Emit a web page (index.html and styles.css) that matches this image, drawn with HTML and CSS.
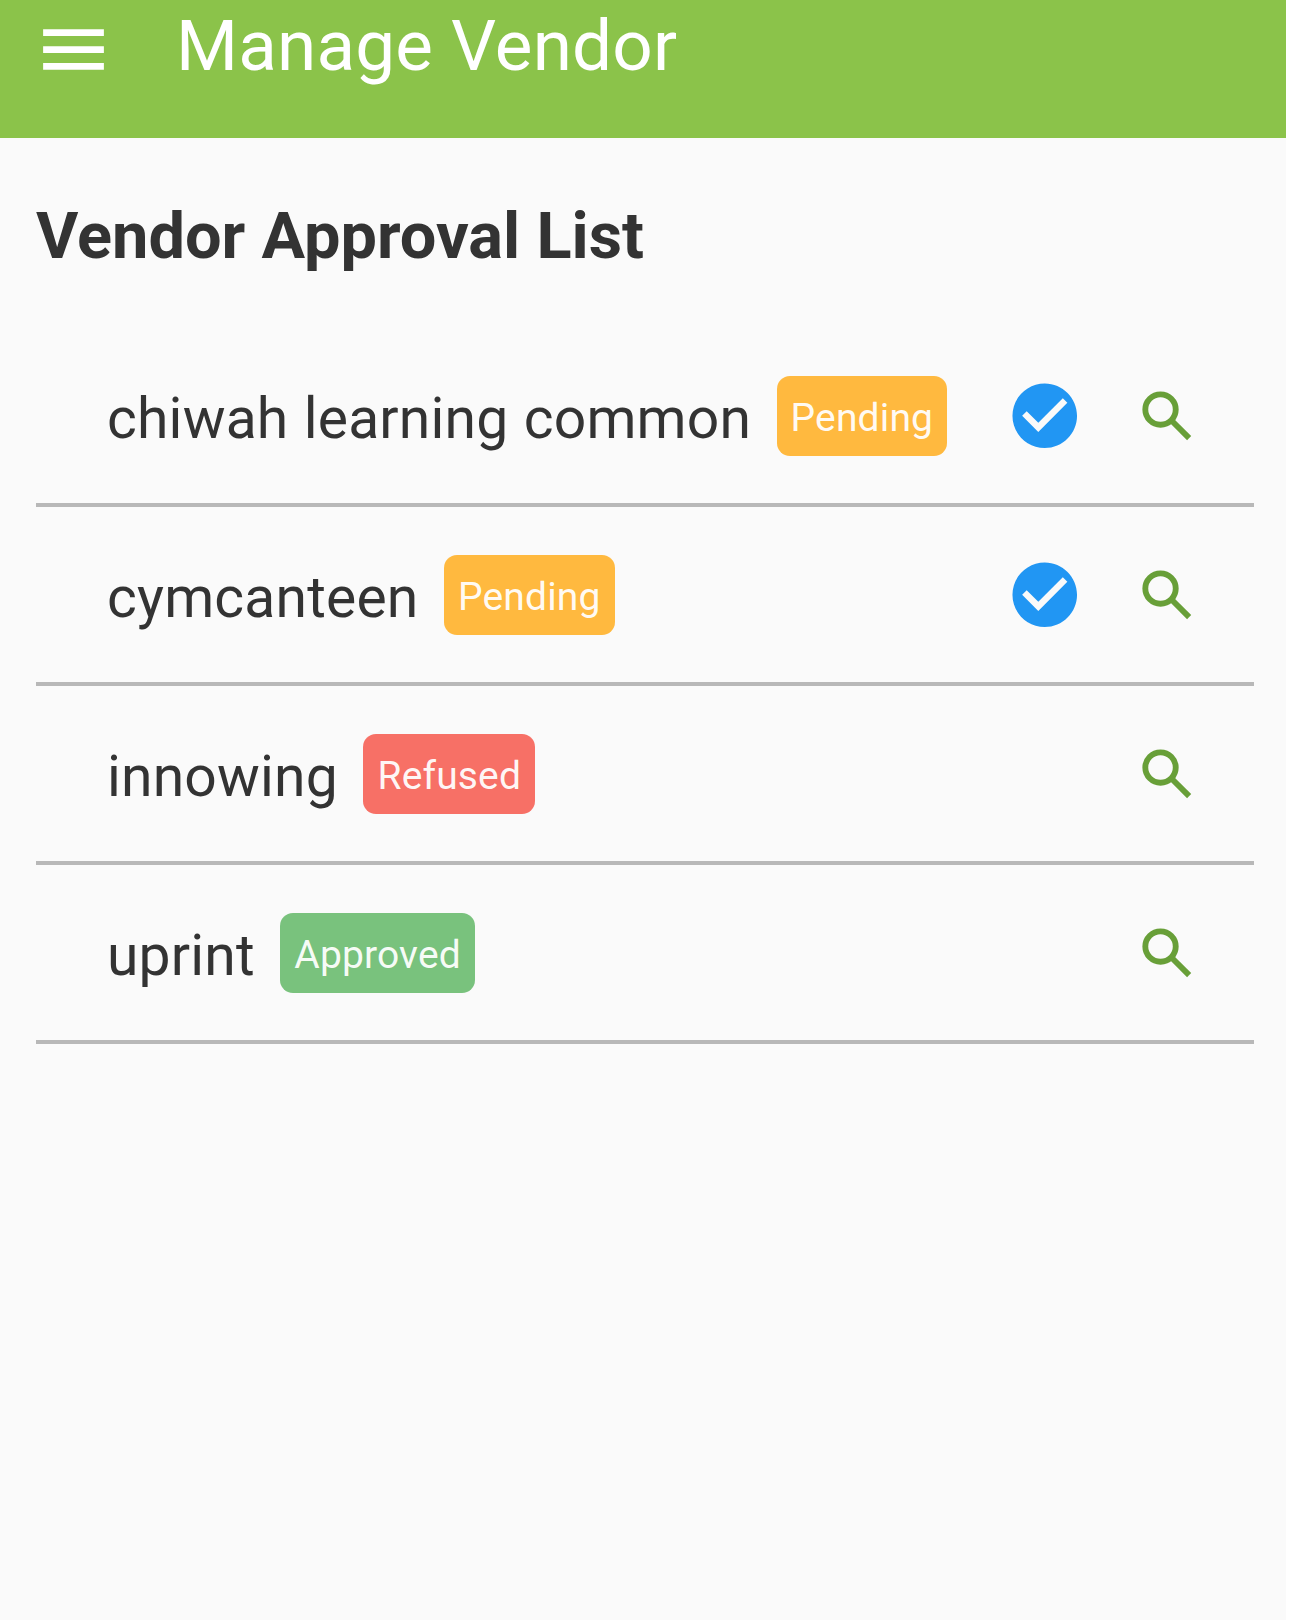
FILE: index.html
```html
<!DOCTYPE html>
<html lang="en">
<head>
<meta charset="utf-8">
<title>Manage Vendor</title>
<link rel="stylesheet" href="styles.css">
</head>
<body>
<svg class="sprite" aria-hidden="true">
  <symbol id="menu" viewBox="0 0 24 24"><path d="M3 18h18v-2H3v2zm0-5h18v-2H3v2zm0-7v2h18V6H3z"/></symbol>
  <symbol id="check" viewBox="0 0 24 24"><path d="M12 2C6.48 2 2 6.48 2 12s4.48 10 10 10 10-4.48 10-10S17.52 2 12 2zm-2 15l-5-5 1.41-1.41L10 14.17l7.59-7.59L19 8l-9 9z"/></symbol>
  <symbol id="search" viewBox="0 0 24 24"><circle cx="9.5" cy="9.5" r="5.45"/><path d="M13.6 13.6l6.15 6.15"/></symbol>
</svg>
<div class="app">
  <header class="app-bar">
    <svg class="menu-icon"><use href="#menu"/></svg>
    <h1 class="app-title">Manage Vendor</h1>
  </header>
  <main class="content">
    <h2 class="list-title">Vendor Approval List</h2>
    <ul class="vendors">
      <li class="vendor">
        <span class="name">chiwah learning common</span>
        <span class="badge pending">Pending</span>
        <span class="actions"><svg class="check-icon"><use href="#check"/></svg><svg class="search-icon"><use href="#search"/></svg></span>
      </li>
      <li class="vendor">
        <span class="name">cymcanteen</span>
        <span class="badge pending">Pending</span>
        <span class="actions"><svg class="check-icon"><use href="#check"/></svg><svg class="search-icon"><use href="#search"/></svg></span>
      </li>
      <li class="vendor">
        <span class="name">innowing</span>
        <span class="badge refused">Refused</span>
        <span class="actions"><svg class="search-icon"><use href="#search"/></svg></span>
      </li>
      <li class="vendor">
        <span class="name">uprint</span>
        <span class="badge approved">Approved</span>
        <span class="actions"><svg class="search-icon"><use href="#search"/></svg></span>
      </li>
    </ul>
  </main>
</div>
</body>
</html>
```
FILE: styles.css
```css
* { box-sizing: border-box; }
body {
  margin: 0;
  background: #fff;
  color: #333;
  font-family: Roboto, "Liberation Sans", sans-serif;
}
.sprite { display: none; }
.app {
  width: 1286px;
  min-height: 1620px;
  background: #fafafa;
}
.app-bar {
  display: flex;
  align-items: flex-start;
  height: 138px;
  padding: 9px 33px 0;
  background: #8bc34a;
  color: #fff;
}
.menu-icon {
  width: 81px;
  height: 81px;
  fill: currentColor;
}
.app-title {
  margin: 0 0 0 62px;
  font-size: 71px;
  font-weight: 400;
  line-height: 74px;
  letter-spacing: 0.2px;
  white-space: nowrap;
}
.content { padding: 58px 32px 0 36px; }
.list-title {
  margin: 0;
  height: 132px;
  font-size: 64.9px;
  font-weight: 700;
  line-height: 80px;
  white-space: nowrap;
}
.vendors {
  margin: 0;
  padding: 0;
  list-style: none;
}
.vendor {
  display: flex;
  align-items: center;
  height: 179px;
  padding: 0 53px 0 71px;
  border-bottom: 4px solid #b8b8b8;
}
.name {
  margin-top: 7px;
  font-size: 57px;
  line-height: 70px;
  letter-spacing: 0.18px;
  word-spacing: 1px;
  white-space: nowrap;
}
.badge {
  height: 80px;
  margin-left: 25.5px;
  padding: 0 14px;
  border-radius: 13px;
  color: rgba(255, 255, 255, 0.95);
  font-size: 39px;
  line-height: 85px;
  letter-spacing: 0.15px;
}
.pending { background: #ffb93f; }
.refused { background: #f77066; }
.approved { background: #79c27d; }
.actions {
  display: flex;
  align-items: center;
  gap: 51px;
  margin: 1px 0 0 auto;
}
.check-icon {
  width: 77.5px;
  height: 77.5px;
  fill: #2196f3;
}
.search-icon {
  width: 67px;
  height: 67px;
  fill: none;
  stroke: #689f38;
  stroke-width: 2.1;
}
```
